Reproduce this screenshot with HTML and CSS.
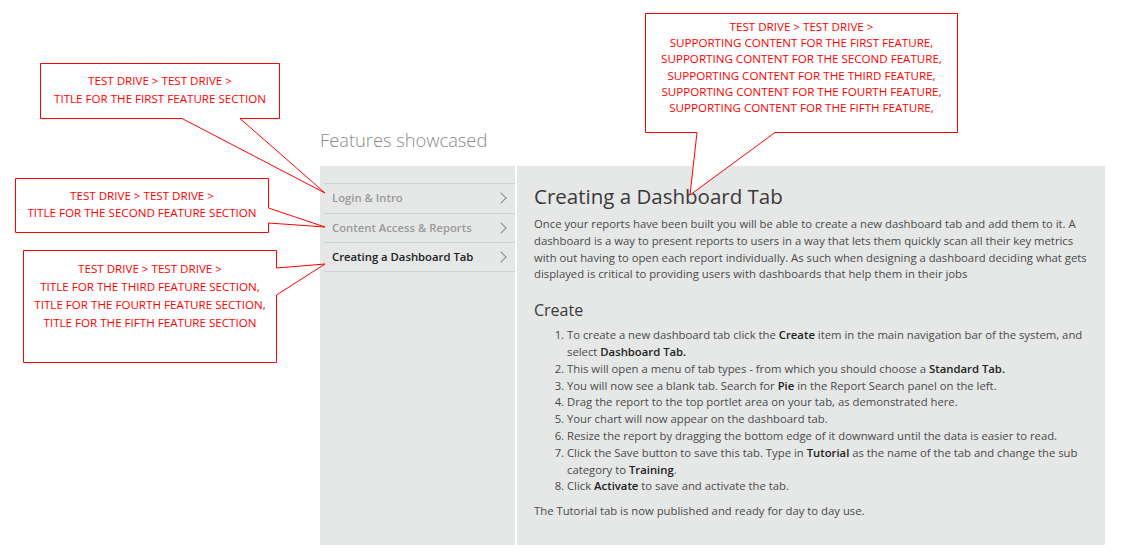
FILE: index.html
```html
<!DOCTYPE html>
<html lang="en">
<head>
<meta charset="utf-8">
<title>Features showcased</title>
<link rel="stylesheet" href="styles.css">
</head>
<body>
<div class="page">
  <section class="showcase">
    <h2 class="showcase-title">Features showcased</h2>
    <div class="panels">
      <nav class="sidebar">
        <a class="nav-item muted">Login &amp; Intro<span class="chev"></span></a>
        <a class="nav-item muted">Content Access &amp; Reports<span class="chev"></span></a>
        <a class="nav-item active">Creating a Dashboard Tab<span class="chev"></span></a>
      </nav>
      <article class="main">
        <h1 class="main-title">Creating a Dashboard Tab</h1>
        <p class="intro">Once your reports have been built you will be able to create a new dashboard tab and add them to it. A dashboard is a way to present reports to users in a way that lets them quickly scan all their key metrics with out having to open each report individually. As such when designing a dashboard deciding what gets displayed is critical to providing users with dashboards that help them in their jobs</p>
        <h3 class="sub-title">Create</h3>
        <ol class="steps">
          <li>To create a new dashboard tab click the <b>Create</b> item in the main navigation bar of the system, and select <b>Dashboard Tab.</b></li>
          <li>This will open a menu of tab types - from which you should choose a <b>Standard Tab.</b></li>
          <li>You will now see a blank tab. Search for <b>Pie</b> in the Report Search panel on the left.</li>
          <li>Drag the report to the top portlet area on your tab, as demonstrated here.</li>
          <li>Your chart will now appear on the dashboard tab.</li>
          <li>Resize the report by dragging the bottom edge of it downward until the data is easier to read.</li>
          <li>Click the Save button to save this tab. Type in <b>Tutorial</b> as the name of the tab and change the sub category to <b>Training</b>.</li>
          <li>Click <b>Activate</b> to save and activate the tab.</li>
        </ol>
        <p class="outro">The Tutorial tab is now published and ready for day to day use.</p>
      </article>
    </div>
  </section>

  <svg class="callout-lines" width="1121" height="556" viewBox="0 0 1121 556">
    <g fill="#fff" stroke="#ff0000" stroke-width="1">
      <path d="M645.5 13.5 H957.5 V132.5 H775 L690 195 L697 132.5 H645.5 Z"/>
      <path d="M40.5 63.5 H279.5 V118.5 H240 L325 193 L182 118.5 H40.5 Z"/>
      <path d="M15.5 178.5 H268.5 V208 L325 227 L268.5 223 V232.5 H15.5 Z"/>
      <path d="M23.5 250.5 H276.5 V268 L325 264 L276.5 295 V362.5 H23.5 Z"/>
    </g>
  </svg>

  <div class="callout c1">TEST DRIVE &gt; TEST DRIVE &gt;<br>SUPPORTING CONTENT FOR THE FIRST FEATURE,<br>SUPPORTING CONTENT FOR THE SECOND FEATURE,<br>SUPPORTING CONTENT FOR THE THIRD FEATURE,<br>SUPPORTING CONTENT FOR THE FOURTH FEATURE,<br>SUPPORTING CONTENT FOR THE FIFTH FEATURE,</div>
  <div class="callout c2">TEST DRIVE &gt; TEST DRIVE &gt;<br>TITLE FOR THE FIRST FEATURE SECTION</div>
  <div class="callout c3">TEST DRIVE &gt; TEST DRIVE &gt;<br>TITLE FOR THE SECOND FEATURE SECTION</div>
  <div class="callout c4">TEST DRIVE &gt; TEST DRIVE &gt;<br>TITLE FOR THE THIRD FEATURE SECTION,<br>TITLE FOR THE FOURTH FEATURE SECTION,<br>TITLE FOR THE FIFTH FEATURE SECTION</div>
</div>
</body>
</html>
```
FILE: styles.css
```css
* { box-sizing: border-box; }
html, body { margin: 0; padding: 0; background: #fff; }
body {
  font-family: "Open Sans", "Noto Sans", "Liberation Sans", sans-serif;
  color: #444;
}
.page {
  position: relative;
  width: 1121px;
  height: 556px;
  overflow: hidden;
}
.showcase {
  padding: 127px 0 0 320px;
}
.showcase-title {
  margin: 0 0 13px;
  font-size: 18.3px;
  font-weight: 300;
  color: #8a8a8a;
  line-height: 26px;
  height: 26px;
}
.panels {
  display: flex;
  gap: 2px;
  height: 379px;
}
.sidebar {
  width: 195px;
  background: #e6e7e7;
  padding-top: 17px;
  display: flex;
  flex-direction: column;
}
.nav-item {
  position: relative;
  display: block;
  height: 29.5px;
  line-height: 27px;
  margin-left: 4px;
  padding-left: 8px;
  font-size: 11.3px;
  font-weight: 600;
  border-top: 1px solid #cfd0d0;
  color: #9a9a9a;
}
.nav-item:last-child { border-bottom: 1px solid #cfd0d0; }
.nav-item.active { color: #222; }
.chev {
  position: absolute;
  right: 10px;
  top: 10px;
  width: 8px;
  height: 8px;
  border-right: 1px solid #8a8a8a;
  border-top: 1px solid #8a8a8a;
  transform: rotate(45deg);
}
.main {
  width: 588px;
  background: #e6e7e7;
  padding: 16px 17px 0 17px;
}
.main-title {
  margin: 0;
  font-size: 20.5px;
  font-weight: 400;
  color: #3a3a3a;
  line-height: 28px;
}
.intro {
  margin: 6px 0 0;
  font-size: 11.3px;
  line-height: 16.8px;
  color: #4a4a4a;
}
.sub-title {
  margin: 16px 0 0;
  font-size: 16px;
  font-weight: 400;
  color: #3a3a3a;
  line-height: 22px;
}
.steps {
  margin: 6px 0 0;
  padding-left: 33px;
  font-size: 11.3px;
  line-height: 16.8px;
  color: #4a4a4a;
}
.steps b, .intro b { font-weight: 600; color: #222; }
.outro {
  margin: 8px 0 0;
  font-size: 11.3px;
  line-height: 16.8px;
  color: #4a4a4a;
}
.callout-lines {
  position: absolute;
  left: 0;
  top: 0;
}
.callout {
  position: absolute;
  text-align: center;
  color: #ff0000;
  font-size: 11.6px;
  white-space: nowrap;
}
.c1 { left: 645px; top: 19px; width: 313px; line-height: 16.2px; }
.c2 { left: 40px; top: 72px; width: 240px; line-height: 18px; }
.c3 { left: 15px; top: 187px; width: 254px; line-height: 17px; }
.c4 { left: 23px; top: 260px; width: 254px; line-height: 18px; }
```
